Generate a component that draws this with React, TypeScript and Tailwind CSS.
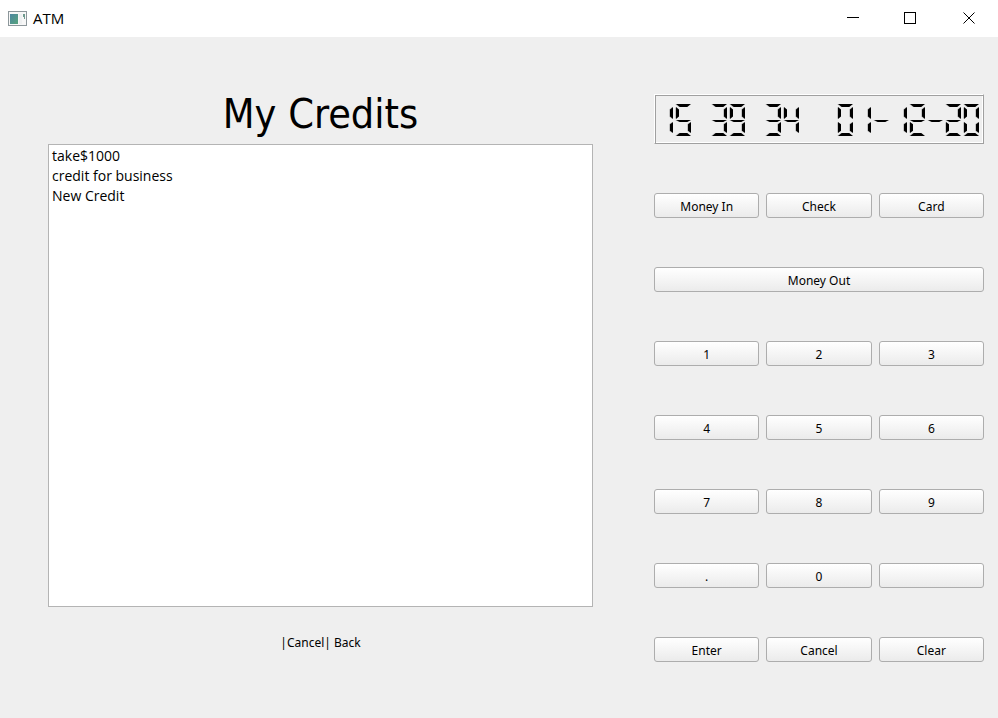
import type { ReactNode } from "react";

const keyRows: string[][] = [
  ["Money In", "Check", "Card"],
  ["Money Out"],
  ["1", "2", "3"],
  ["4", "5", "6"],
  ["7", "8", "9"],
  [".", "0", ""],
  ["Enter", "Cancel", "Clear"],
];

const credits = ["take$1000", "credit for business", "New Credit"];

// Lit segments: a top, b/c right, d bottom, e/f left, g middle.
const litSegments: Record<string, string> = {
  "0": "abcdef",
  "1": "bc",
  "2": "abged",
  "3": "abgcd",
  "4": "fgbc",
  "5": "afgcd",
  "6": "afgedc",
  "7": "abc",
  "8": "abcdefg",
  "9": "abcdfg",
  "-": "g",
  " ": "",
};

const segmentPlaces: Record<string, string> = {
  a: "col-span-3 col-start-1 row-start-1 [clip-path:polygon(0_0,100%_0,75%_100%,25%_100%)]",
  f: "col-start-1 row-start-2 [clip-path:polygon(0_0,100%_20%,100%_80%,0_100%)]",
  b: "col-start-3 row-start-2 [clip-path:polygon(0_20%,100%_0,100%_100%,0_80%)]",
  g: "col-span-3 col-start-1 row-start-3 [clip-path:polygon(0_30%,100%_30%,75%_100%,25%_100%)]",
  e: "col-start-1 row-start-4 [clip-path:polygon(0_0,100%_20%,100%_80%,0_100%)]",
  c: "col-start-3 row-start-4 [clip-path:polygon(0_20%,100%_0,100%_100%,0_80%)]",
  d: "col-span-3 col-start-1 row-start-5 [clip-path:polygon(25%_0,75%_0,100%_100%,0_100%)]",
};

function LcdDigit({ char }: { char: string }) {
  return (
    <span className="grid h-8 w-[15px] grid-cols-[3px_9px_3px] grid-rows-[3px_12px_3px_11px_3px] drop-shadow-[-1px_0_0_#c4c4c4]">
      {litSegments[char].split("").map((s) => (
        <span key={s} className={"bg-black " + segmentPlaces[s]} />
      ))}
    </span>
  );
}

function LcdDisplay({ value }: { value: string }) {
  return (
    <div
      role="img"
      aria-label={value}
      className="flex h-[50px] items-center justify-end gap-[3px] border border-t-white border-r-[#a0a0a0] border-b-[#a0a0a0] border-l-white pt-0.5 pr-1 shadow-[inset_1px_1px_0_#a0a0a0,inset_-1px_-1px_0_#fff]"
    >
      {value.split("").map((c, i) => (
        <LcdDigit key={i} char={c} />
      ))}
    </div>
  );
}

function WindowButton({ label, children }: { label: string; children: ReactNode }) {
  return (
    <button type="button" aria-label={label} className="flex w-[58px] items-center justify-center">
      <svg width="14" height="13" viewBox="0 0 14 13" fill="none" stroke="#000">
        {children}
      </svg>
    </button>
  );
}

function AppIcon() {
  return (
    <svg width="19" height="16" viewBox="0 0 19 16" aria-hidden="true">
      <defs>
        <linearGradient id="pane" x1="0" y1="0" x2="1" y2="1">
          <stop offset="0" stopColor="#4b86a0" />
          <stop offset="1" stopColor="#57a37c" />
        </linearGradient>
      </defs>
      <rect x="0.5" y="0.5" width="18" height="14" fill="#f7f7f7" stroke="#8d979b" />
      <rect x="2" y="3" width="8" height="10" fill="url(#pane)" />
      <rect x="11" y="3" width="3" height="10" fill="#eef0f1" />
      <path d="M15 3h2v5h-1v-2h-1z" fill="#6f9a8e" />
    </svg>
  );
}

export default function App() {
  return (
    <div className="flex min-h-screen flex-col bg-[#efefef] font-['Noto_Sans',sans-serif] text-black">
      <header className="flex h-[37px] bg-white">
        <div className="flex flex-1 items-center gap-1.5 pl-2 font-['Open_Sans',sans-serif] text-[15px]">
          <AppIcon />
          <span>ATM</span>
        </div>
        <WindowButton label="Minimize">
          <path d="M1 5.5h12" />
        </WindowButton>
        <WindowButton label="Maximize">
          <rect x="0.5" y="0.5" width="11" height="11" />
        </WindowButton>
        <WindowButton label="Close">
          <path d="M1.5 0.5l11 11M12.5 0.5l-11 11" />
        </WindowButton>
      </header>

      <main className="grid flex-1 grid-cols-[minmax(0,1fr)_330px] gap-[61px] pr-3.5 pl-12">
        <section className="flex flex-col pt-[47px] pb-[65px]">
          <h1 className="text-center font-['DejaVu_Sans_Condensed','Noto_Sans',sans-serif] text-[41px] leading-[60px]">My Credits</h1>
          <ul className="flex-1 border border-[#b4b4b4] bg-white px-[3px] py-px font-['Open_Sans',sans-serif] text-[14px] leading-5">
            {credits.map((c) => (
              <li key={c}>{c}</li>
            ))}
          </ul>
          <p className="mt-[26px] text-center text-[12px] leading-5">|Cancel| Back</p>
        </section>

        <section className="flex flex-col gap-[49px] pt-[57px]">
          <LcdDisplay value="15 39 34  01-12-20" />
          {keyRows.map((row, i) => (
            <div key={i} className="flex gap-[7px]">
              {row.map((label, j) => (
                <button
                  key={j}
                  type="button"
                  aria-label={label || "Blank"}
                  className="h-[25px] flex-1 rounded-[3px] border border-[#adadad] bg-linear-to-b from-white to-[#ebebeb] pt-0.5 text-[12px] leading-5"
                >
                  {label}
                </button>
              ))}
            </div>
          ))}
        </section>
      </main>
    </div>
  );
}
